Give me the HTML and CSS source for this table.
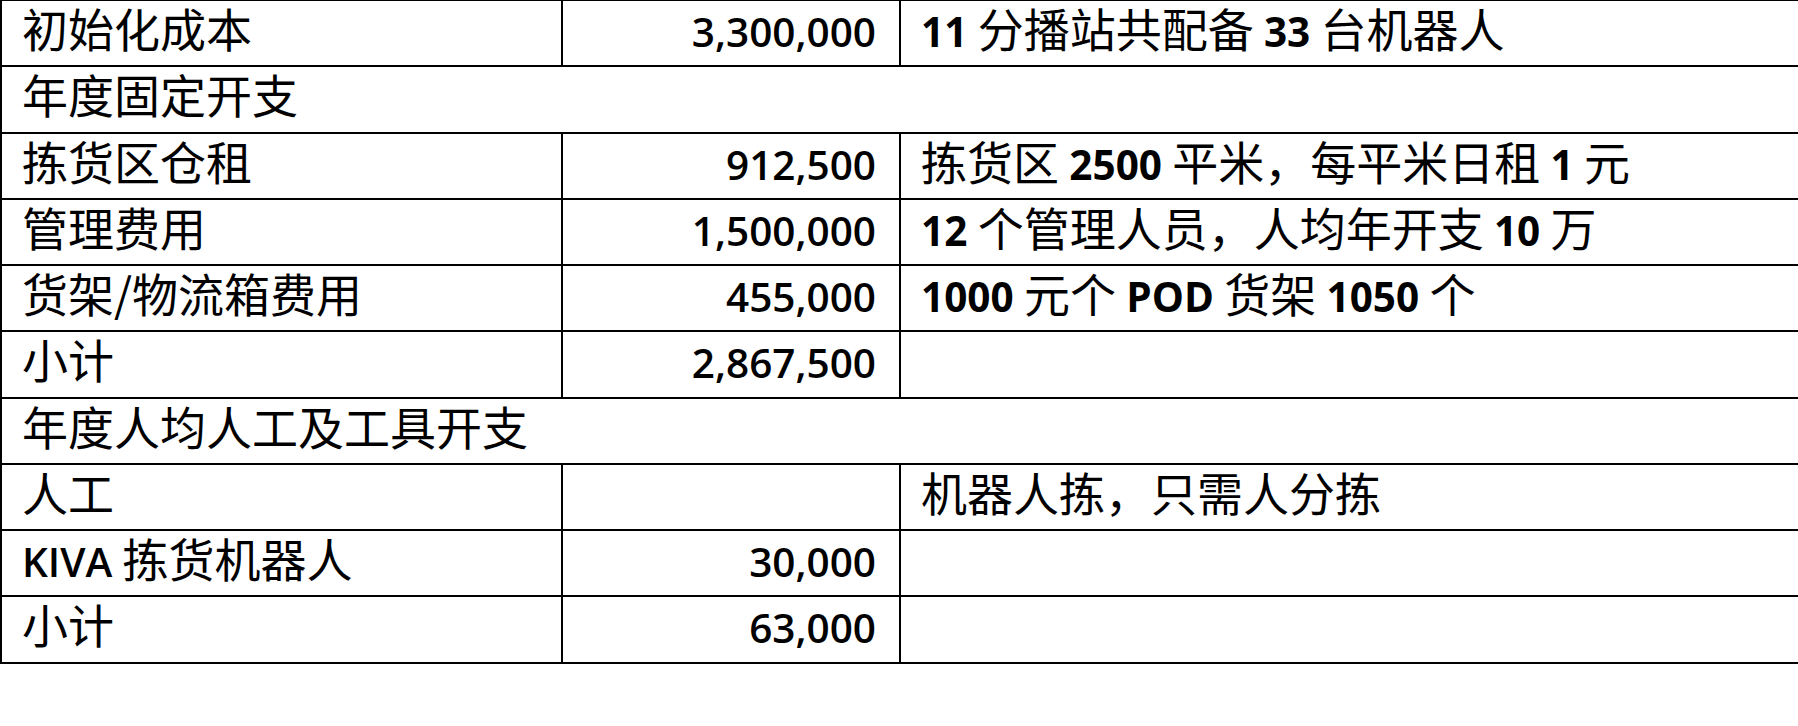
FILE: index.html
```html
<!DOCTYPE html>
<html lang="zh-CN">
<head>
<meta charset="utf-8">
<title>成本表</title>
<link rel="stylesheet" href="styles.css">
</head>
<body>
<div class="sheet">
  <div class="cell">初始化成本</div>
  <div class="cell num"><span class="lat">3,300,000</span></div>
  <div class="cell note"><span class="lat strong">11</span> 分播站共配备 <span class="lat strong">33</span> 台机器人</div>

  <div class="cell span">年度固定开支</div>

  <div class="cell">拣货区仓租</div>
  <div class="cell num"><span class="lat">912,500</span></div>
  <div class="cell note">拣货区 <span class="lat strong">2500</span> 平米，每平米日租 <span class="lat strong">1</span> 元</div>

  <div class="cell">管理费用</div>
  <div class="cell num"><span class="lat">1,500,000</span></div>
  <div class="cell note"><span class="lat strong">12</span> 个管理人员，人均年开支 <span class="lat strong">10</span> 万</div>

  <div class="cell">货架/物流箱费用</div>
  <div class="cell num"><span class="lat">455,000</span></div>
  <div class="cell note"><span class="lat strong">1000</span> 元个 <span class="lat strong">POD</span> 货架 <span class="lat strong">1050</span> 个</div>

  <div class="cell">小计</div>
  <div class="cell num"><span class="lat">2,867,500</span></div>
  <div class="cell note"></div>

  <div class="cell span">年度人均人工及工具开支</div>

  <div class="cell">人工</div>
  <div class="cell num"></div>
  <div class="cell note">机器人拣，只需人分拣</div>

  <div class="cell"><span class="lat">KIVA</span> 拣货机器人</div>
  <div class="cell num"><span class="lat">30,000</span></div>
  <div class="cell note"></div>

  <div class="cell">小计</div>
  <div class="cell num"><span class="lat">63,000</span></div>
  <div class="cell note"></div>
</div>
</body>
</html>
```

FILE: styles.css
```css
html, body {
  margin: 0;
  padding: 0;
  background: #ffffff;
  overflow: hidden;
}

body {
  width: 1798px;
  height: 726px;
}

.sheet {
  display: grid;
  grid-template-columns: 561px 338px 920px;
  grid-auto-rows: 66.25px;
  width: 1821px;
  margin-top: -1px;
  border-top: 2px solid #000;
  border-left: 2px solid #000;
  font-family: "Noto Sans CJK SC", "Noto Sans CJK JP", sans-serif;
  font-size: 46px;
  color: #000;
}

.cell {
  box-sizing: border-box;
  border-right: 2px solid #000;
  border-bottom: 2px solid #000;
  padding: 0 20px;
  line-height: 53px;
  white-space: nowrap;
}

.num {
  text-align: right;
  padding-right: 23px;
}

.span {
  grid-column: 1 / -1;
}

.lat {
  font-family: "Open Sans", "Noto Sans", sans-serif;
  font-size: 40.5px;
  font-weight: 600;
}

.strong {
  font-weight: 700;
}
```
